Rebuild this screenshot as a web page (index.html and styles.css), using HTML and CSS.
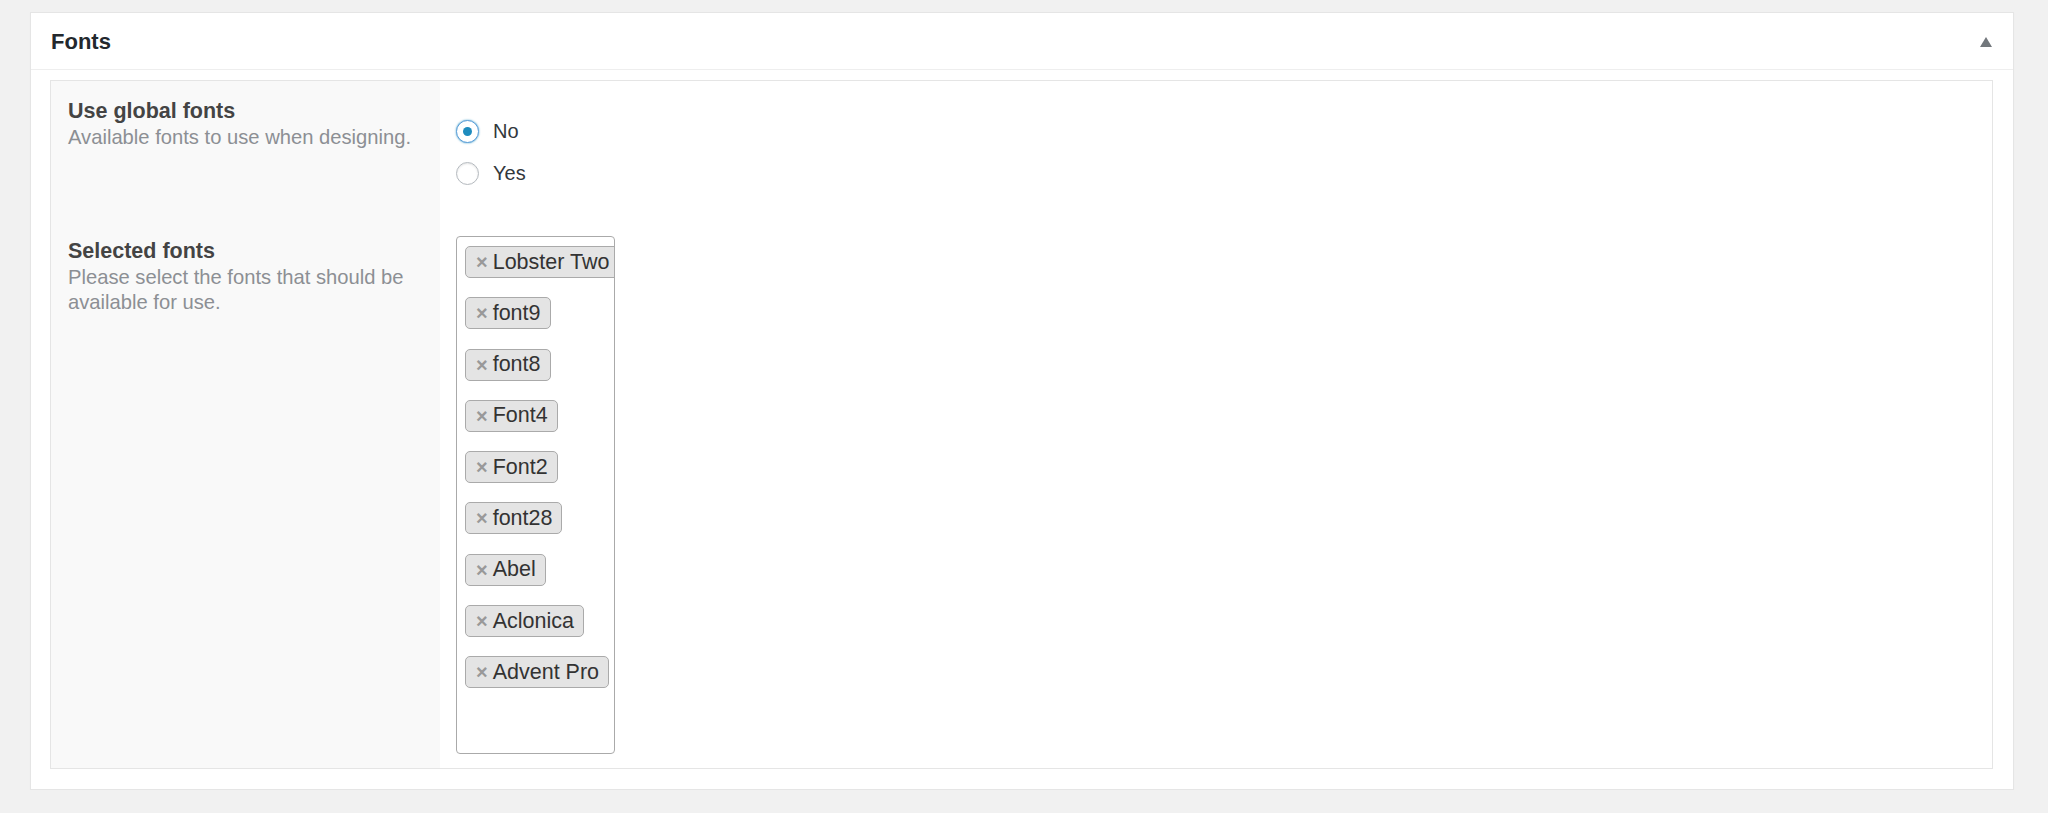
FILE: index.html
```html
<!DOCTYPE html>
<html lang="en">
<head>
<meta charset="utf-8">
<title>Fonts</title>
<link rel="stylesheet" href="styles.css">
</head>
<body>
<div class="page">
  <div class="postbox">
    <div class="postbox-header">
      <h2 class="hndle">Fonts</h2>
      <span class="toggle" aria-hidden="true"></span>
    </div>
    <div class="inside">
      <div class="form-table">
        <div class="th th-first">
          <div class="label">Use global fonts</div>
          <div class="desc">Available fonts to use when designing.</div>
        </div>
        <div class="td td-first">
          <label class="radio-row"><span class="radio checked"></span><span class="radio-text">No</span></label>
          <label class="radio-row"><span class="radio"></span><span class="radio-text">Yes</span></label>
        </div>
        <div class="th th-second">
          <div class="label">Selected fonts</div>
          <div class="desc">Please select the fonts that should be available for use.</div>
        </div>
        <div class="td td-second">
          <div class="select-box">
            <span class="tag"><span class="tag-x">×</span>Lobster Two</span>
            <span class="tag"><span class="tag-x">×</span>font9</span>
            <span class="tag"><span class="tag-x">×</span>font8</span>
            <span class="tag"><span class="tag-x">×</span>Font4</span>
            <span class="tag"><span class="tag-x">×</span>Font2</span>
            <span class="tag"><span class="tag-x">×</span>font28</span>
            <span class="tag"><span class="tag-x">×</span>Abel</span>
            <span class="tag"><span class="tag-x">×</span>Aclonica</span>
            <span class="tag"><span class="tag-x">×</span>Advent Pro</span>
          </div>
        </div>
      </div>
    </div>
  </div>
</div>
</body>
</html>
```
FILE: styles.css
```css
* { box-sizing: border-box; }
html, body { margin: 0; padding: 0; }
body {
  background: #f1f1f1;
  font-family: "Liberation Sans", Arial, sans-serif;
  color: #444;
}
.page {
  padding: 12px 34px 0 30px;
}
.postbox {
  background: #fff;
  border: 1px solid #e5e5e5;
  box-shadow: 0 1px 1px rgba(0,0,0,.04);
}
.postbox-header {
  height: 57px;
  border-bottom: 1px solid #eeeeee;
  display: flex;
  align-items: center;
  justify-content: space-between;
  padding: 2px 21px 0 20px;
}
.hndle {
  margin: 0;
  font-size: 22px;
  font-weight: 700;
  color: #23282d;
  line-height: 1;
}
.toggle {
  width: 0;
  height: 0;
  border-left: 6px solid transparent;
  border-right: 6px solid transparent;
  border-bottom: 10px solid #72777c;
  margin-top: -1px;
}
.inside {
  padding: 10px 20px 20px 19px;
}
.form-table {
  border: 1px solid #e5e5e5;
  display: grid;
  grid-template-columns: 389px 1fr;
}
.th {
  background: #f9f9f9;
  padding-left: 17px;
  padding-right: 18px;
}
.th-first { padding-top: 16px; }
.th-second { padding-top: 21px; }
.label {
  font-size: 21.5px;
  font-weight: 700;
  line-height: 28px;
  color: #444;
}
.desc {
  font-size: 20.2px;
  line-height: 24.5px;
  color: #8c8f94;
}
.td {
  padding-left: 16px;
}
.td-first {
  padding-top: 38px;
  padding-bottom: 31px;
  display: flex;
  flex-direction: column;
  gap: 18px;
}
.radio-row {
  display: flex;
  align-items: center;
  gap: 14px;
  height: 24px;
}
.radio {
  width: 23px;
  height: 23px;
  border-radius: 50%;
  border: 1px solid #b4b9be;
  box-shadow: inset 0 1px 2px rgba(0,0,0,.1);
  background: #fff;
  display: flex;
  align-items: center;
  justify-content: center;
}
.radio.checked {
  border-color: #5b9dd9;
  box-shadow: 0 0 2px rgba(30,140,190,.8);
}
.radio.checked::after {
  content: "";
  width: 9px;
  height: 9px;
  border-radius: 50%;
  background: #1e8cbe;
}
.radio-text {
  font-size: 20px;
  color: #32373c;
  line-height: 24px;
}
.td-second {
  padding-top: 20px;
  padding-bottom: 14px;
}
.select-box {
  width: 159px;
  height: 518px;
  border: 1px solid #aaa;
  border-radius: 4px;
  overflow: hidden;
  padding: 9px 0 0 8px;
  display: flex;
  flex-direction: column;
  align-items: flex-start;
  gap: 19.3px;
  background: #fff;
}
.tag {
  display: inline-flex;
  align-items: center;
  white-space: nowrap;
  height: 32px;
  padding: 0 9px 0 10px;
  border: 1px solid #aaa;
  border-radius: 5px;
  background: #e4e4e4;
  font-size: 21.5px;
  color: #333;
  flex-shrink: 0;
}
.tag-x {
  font-size: 20px;
  font-weight: 700;
  color: #999;
  margin-right: 5px;
  line-height: 1;
}
```
